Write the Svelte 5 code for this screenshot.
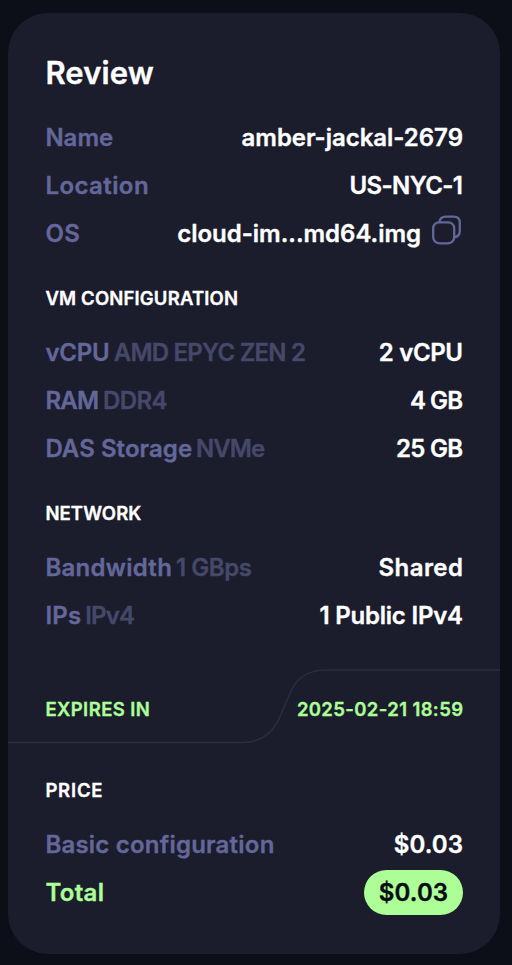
<script>
  const general = [
    { label: 'Name', ls: 0, value: 'amber-jackal-2679', vs: -0.03 },
    { label: 'Location', ls: 0.42, value: 'US-NYC-1', vs: -0.6 },
    { label: 'OS', ls: 0.4, value: 'cloud-im...md64.img', vs: -0.03, copy: true }
  ];
  const vm = [
    { label: 'vCPU', ls: -0.2, note: 'AMD EPYC ZEN 2', ns: -0.77, value: '2 vCPU', vs: -0.35 },
    { label: 'RAM', ls: -0.8, note: 'DDR4', ns: -0.6, value: '4 GB', vs: -0.9 },
    { label: 'DAS Storage', ls: 0.07, note: 'NVMe', ns: -1, value: '25 GB', vs: -0.75 }
  ];
  const network = [
    { label: 'Bandwidth', ls: 0.28, note: '1 GBps', ns: -0.4, value: 'Shared', vs: 0.45 },
    { label: 'IPs', ls: 0.2, note: 'IPv4', ns: -0.8, value: '1 Public IPv4', vs: -0.22 }
  ];
</script>

{#snippet text(content, spacing, kind)}
  <span class="text {kind}" style:--ls="{spacing}px">{content}</span>
{/snippet}

{#snippet rows(items)}
  {#each items as item}
    <div class="row">
      <dt>
        {@render text(item.label, item.ls, 'label')}
        {#if item.note}{@render text(item.note, item.ns, 'note')}{/if}
      </dt>
      <dd>
        {@render text(item.value, item.vs, 'value')}
        {#if item.copy}
          <button class="copy" aria-label="Copy">
            <svg width="32" height="32" viewBox="0 0 32 32" fill="none" stroke="currentColor" stroke-width="2.3">
              <rect x="2.2" y="8.3" width="21" height="21" rx="6" />
              <path d="M8.2 8.3C8.7 5 10.8 2.6 14.6 2.6H22.6Q28.8 2.6 28.8 8.8V16.8C28.8 20.6 26.6 22.9 23.2 23.4" />
            </svg>
          </button>
        {/if}
      </dd>
    </div>
  {/each}
{/snippet}

<main class="page">
  <section class="card">
    <h1>{@render text('Review', 0.1, '')}</h1>
    <dl>{@render rows(general)}</dl>

    <h2>{@render text('VM CONFIGURATION', 0.17, '')}</h2>
    <dl>{@render rows(vm)}</dl>

    <h2>{@render text('NETWORK', 0.1, '')}</h2>
    <dl>{@render rows(network)}</dl>

    <div class="expires">
      <svg class="curve" width="492" height="76" viewBox="0 0 492 76" fill="none">
        <path d="M0 74.5H235C252 74.5 264.5 65 270.5 52L283.5 22C289.5 9 302 2 318 2H492" stroke="#2d2e3d" stroke-width="1.5" />
      </svg>
      {@render text('EXPIRES IN', 0.42, '')}
      {@render text('2025-02-21 18:59', 0.38, '')}
    </div>

    <h2 class="price">{@render text('PRICE', 0.8, '')}</h2>
    <dl>
      <div class="row">
        <dt>{@render text('Basic configuration', 0.22, 'label')}</dt>
        <dd>{@render text('$0.03', 0.1, 'value')}</dd>
      </div>
      <div class="row">
        <dt>{@render text('Total', 0.35, 'total')}</dt>
        <dd><span class="pill">{@render text('$0.03', 0.1, '')}</span></dd>
      </div>
    </dl>
  </section>
</main>

<style>
  :global(body) {
    background: #0c0e18;
  }
  .page {
    box-sizing: border-box;
    height: 965px;
    padding: 13px 12px 11px 8px;
    background: #0c0e18;
    font-family: Inter, "Noto Sans", sans-serif;
    font-weight: 600;
    font-size: 24px;
    color: #fff;
  }
  .card {
    box-sizing: border-box;
    height: 941px;
    background: #1b1c2c;
    border-radius: 40px;
    overflow: hidden;
  }
  .text {
    letter-spacing: var(--ls);
    margin-right: calc(var(--ls) * -1);
    white-space: pre;
    -webkit-text-stroke: 0.35px currentColor;
  }
  h1, h2, .row, .expires {
    box-sizing: border-box;
    display: flex;
    align-items: center;
    margin: 0;
    padding: 0 37px 0 37.4px;
    font-weight: 600;
  }
  h1 {
    height: 100px;
    padding-top: 18px;
    font-size: 31px;
  }
  h2 {
    height: 71px;
    padding-top: 11px;
    font-size: 18.5px;
  }
  dl {
    margin: 0;
  }
  .row {
    height: 48px;
    justify-content: space-between;
  }
  dt, dd {
    display: flex;
    align-items: center;
    margin: 0;
  }
  dt {
    gap: 4px;
  }
  .label {
    color: #64679a;
  }
  .note {
    color: #464869;
  }
  .total {
    color: #adfe97;
  }
  .copy {
    display: flex;
    margin: -7px 0 0 10px;
    padding: 0;
    border: 0;
    background: none;
    color: #64679a;
  }
  .expires {
    position: relative;
    height: 140px;
    padding-bottom: 1px;
    justify-content: space-between;
    font-size: 18.5px;
    color: #adfe97;
  }
  .curve {
    position: absolute;
    left: 0;
    top: 29px;
  }
  .price {
    height: 41px;
    padding-top: 0;
    padding-bottom: 19px;
  }
  .pill {
    display: flex;
    align-items: center;
    justify-content: center;
    box-sizing: border-box;
    width: 99px;
    height: 45px;
    border-radius: 23px;
    background: #adfe97;
    color: #080a14;
  }
</style>
